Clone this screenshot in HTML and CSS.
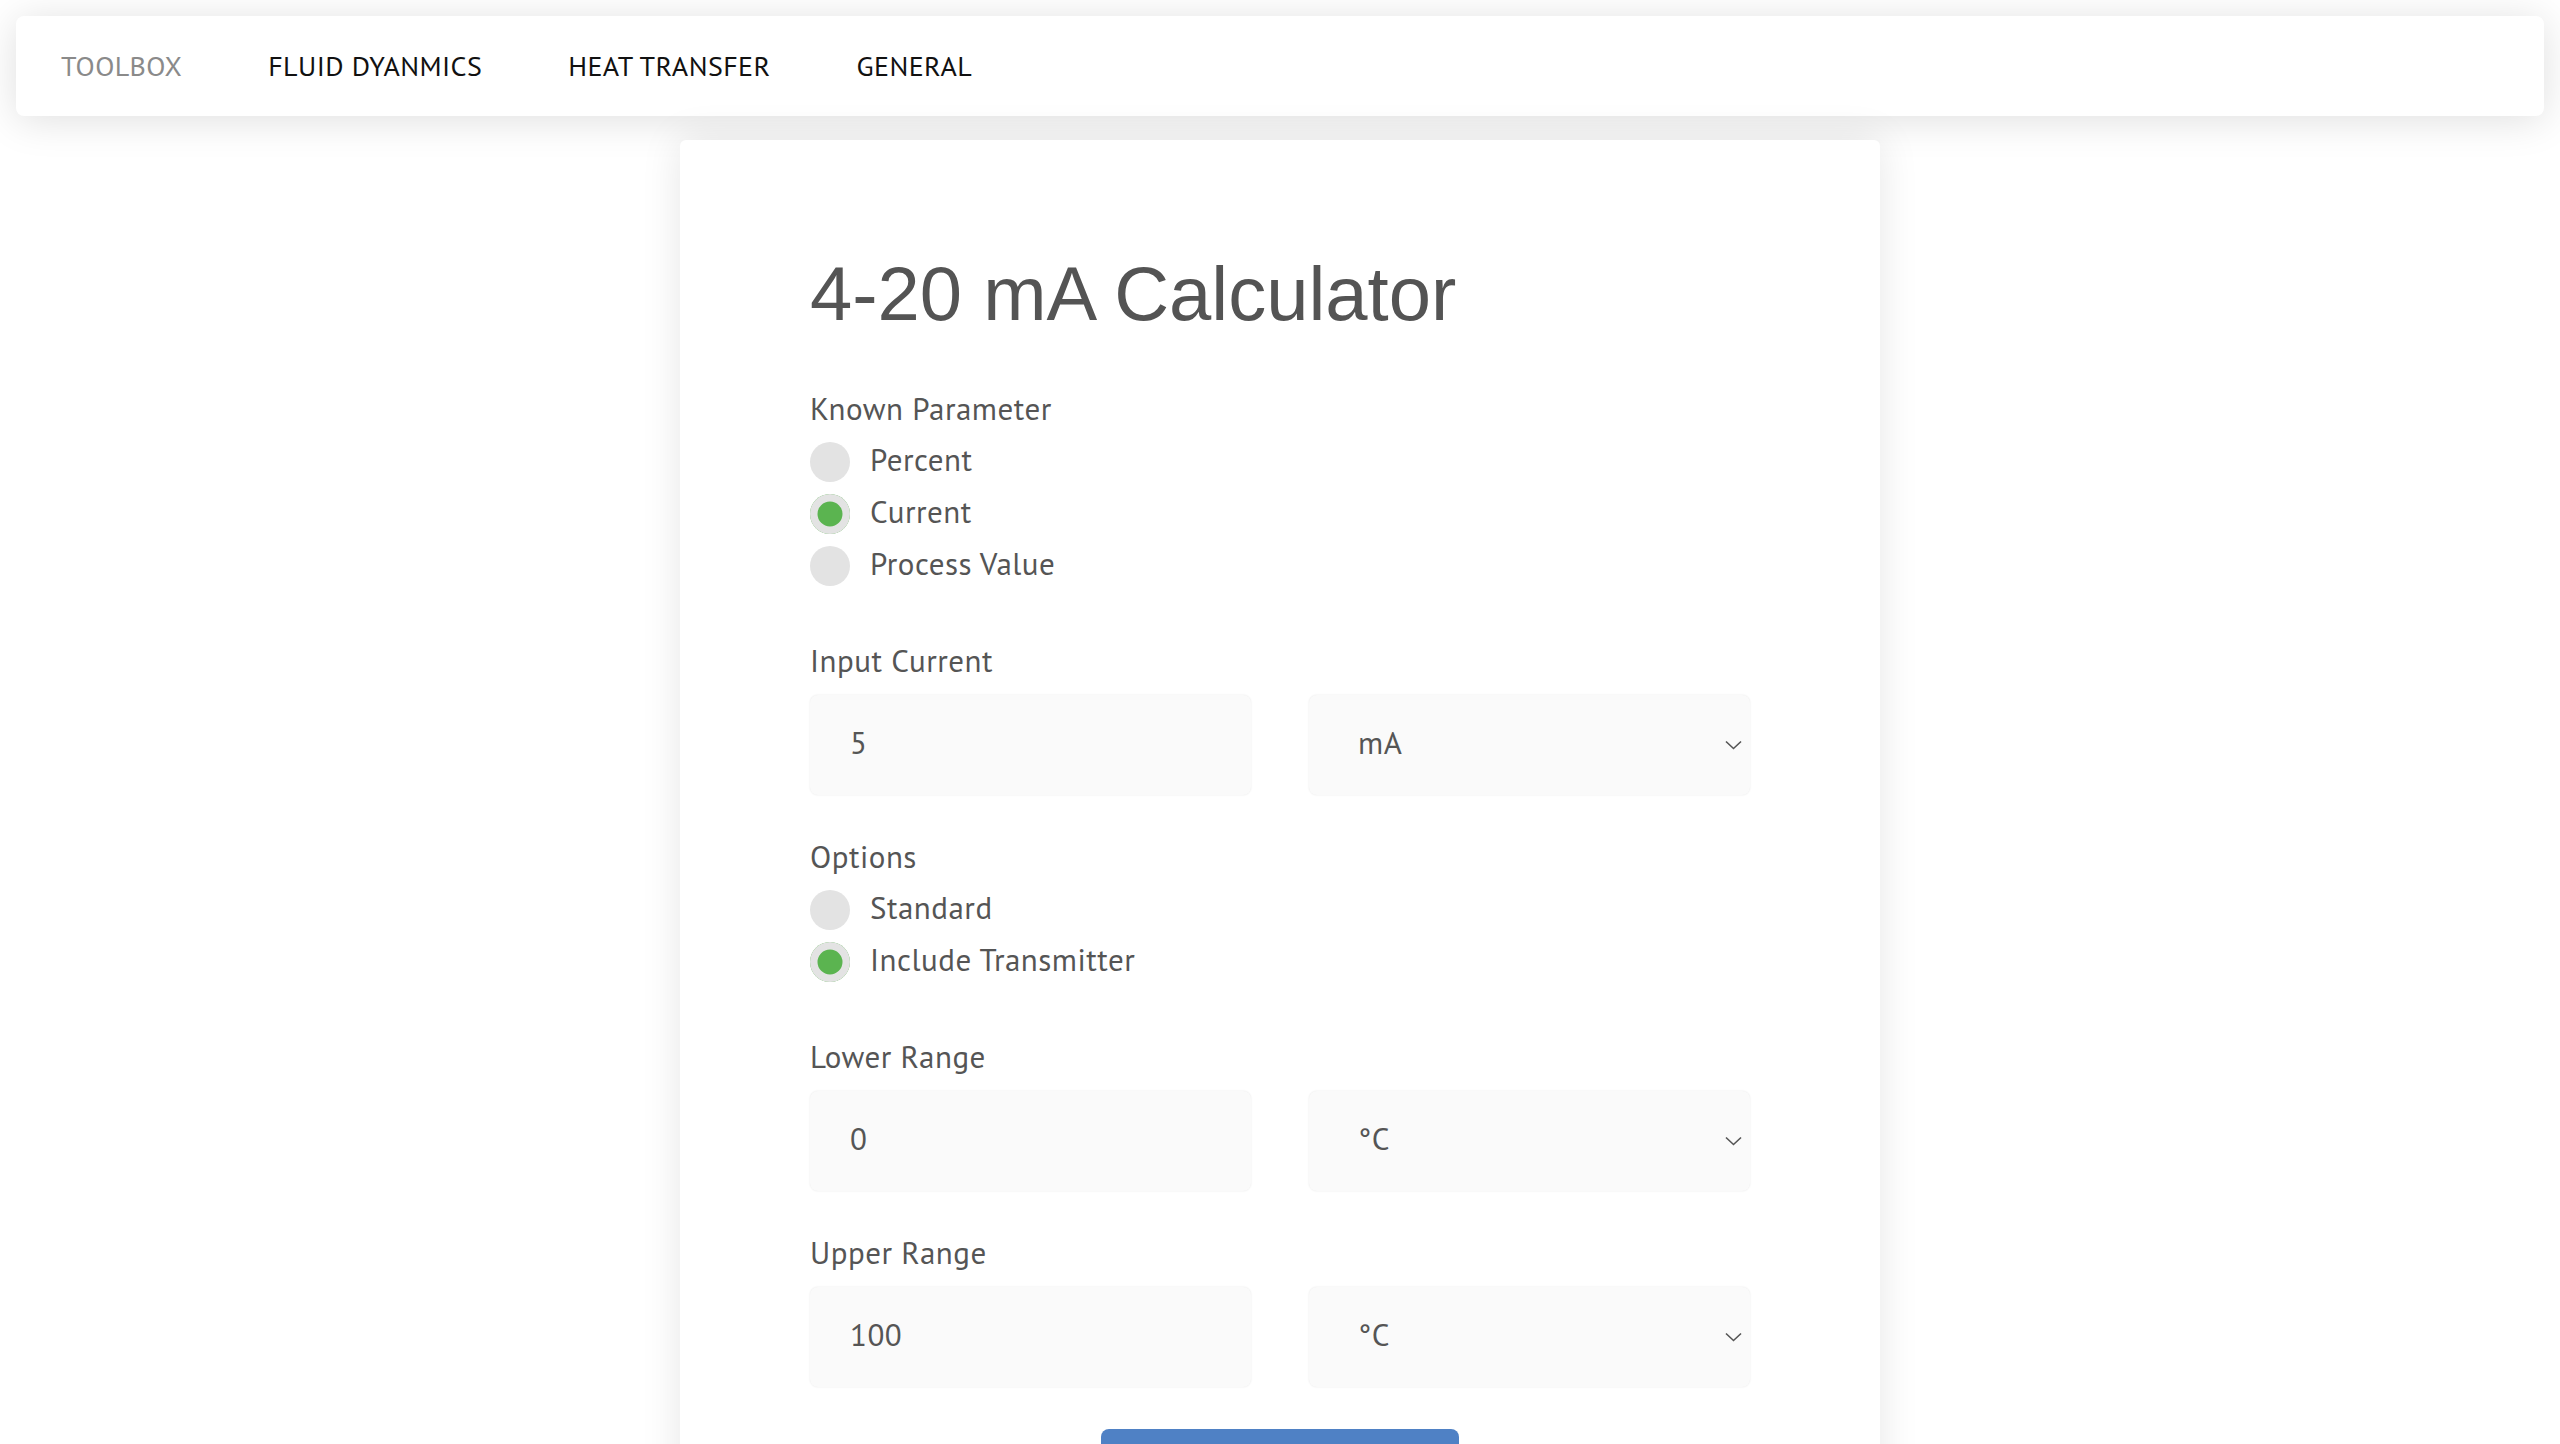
FILE: index.html
```html
<!DOCTYPE html>
<html lang="en">
<head>
<meta charset="utf-8">
<title>4-20 mA Calculator</title>
<link rel="stylesheet" href="styles.css">
</head>
<body>
<nav class="navbar">
  <a class="nav-item nav-brand" href="#">TOOLBOX</a>
  <a class="nav-item" href="#">FLUID DYANMICS</a>
  <a class="nav-item" href="#">HEAT TRANSFER</a>
  <a class="nav-item" href="#">GENERAL</a>
</nav>
<main class="card">
  <h1 class="title">4-20 mA Calculator</h1>

  <div class="radio-group">
    <div class="label">Known Parameter</div>
    <label class="radio"><input type="radio" name="known"><span>Percent</span></label>
    <label class="radio"><input type="radio" name="known" checked><span>Current</span></label>
    <label class="radio"><input type="radio" name="known"><span>Process Value</span></label>
  </div>

  <div class="field">
    <div class="label">Input Current</div>
    <div class="row">
      <input class="input" type="text" value="5">
      <div class="select-wrap">
        <select class="input select"><option>mA</option></select>
        <svg class="chevron" viewBox="0 0 17 10"><path d="M1 1.5 L8.5 8.5 L16 1.5" fill="none" stroke="#555" stroke-width="1.6"/></svg>
      </div>
    </div>
  </div>

  <div class="radio-group">
    <div class="label">Options</div>
    <label class="radio"><input type="radio" name="opt"><span>Standard</span></label>
    <label class="radio"><input type="radio" name="opt" checked><span>Include Transmitter</span></label>
  </div>

  <div class="field">
    <div class="label">Lower Range</div>
    <div class="row">
      <input class="input" type="text" value="0">
      <div class="select-wrap">
        <select class="input select"><option>°C</option></select>
        <svg class="chevron" viewBox="0 0 17 10"><path d="M1 1.5 L8.5 8.5 L16 1.5" fill="none" stroke="#555" stroke-width="1.6"/></svg>
      </div>
    </div>
  </div>

  <div class="field">
    <div class="label">Upper Range</div>
    <div class="row">
      <input class="input" type="text" value="100">
      <div class="select-wrap">
        <select class="input select"><option>°C</option></select>
        <svg class="chevron" viewBox="0 0 17 10"><path d="M1 1.5 L8.5 8.5 L16 1.5" fill="none" stroke="#555" stroke-width="1.6"/></svg>
      </div>
    </div>
  </div>

  <div class="actions">
    <button class="button" type="button">Calculate</button>
  </div>
</main>
</body>
</html>
```
FILE: styles.css
```css
html, body {
  margin: 0;
  padding: 0;
  background: #ffffff;
}

body {
  font-family: "PT Sans", Lato, "Noto Sans", sans-serif;
  color: #555555;
}

.navbar {
  margin: 16px;
  height: 100px;
  box-sizing: border-box;
  background: #ffffff;
  border-radius: 8px;
  box-shadow: 0 4px 40px rgba(0, 0, 0, 0.13);
  display: flex;
  align-items: center;
  padding-left: 45px;
  gap: 86px;
}

.nav-item {
  font-size: 28px;
  letter-spacing: 0.4px;
  color: #111111;
  text-decoration: none;
  line-height: 1;
}

.nav-brand {
  color: #8a8a8a;
}

.card {
  width: 1200px;
  margin: 24px auto 0;
  box-sizing: border-box;
  padding: 116px 130px 60px;
  background: #ffffff;
  border-radius: 6px;
  box-shadow: 0 0 40px rgba(0, 0, 0, 0.1);
}

.title {
  font-family: "Liberation Sans", Arial, sans-serif;
  font-size: 76px;
  font-weight: 400;
  line-height: 76px;
  margin: 0 0 59px;
  color: #545454;
}

.label {
  font-size: 31px;
  letter-spacing: 0.5px;
  line-height: 36px;
  color: #555555;
}

.radio-group {
  margin-bottom: 51px;
}

.radio-group .label {
  margin-bottom: 9px;
}

.radio {
  display: flex;
  align-items: center;
  height: 52px;
  gap: 20px;
  font-size: 31px;
  letter-spacing: 0.5px;
  color: #555555;
}

.radio span {
  padding-bottom: 5px;
}

.radio input {
  appearance: none;
  -webkit-appearance: none;
  margin: 0;
  width: 40px;
  height: 40px;
  border-radius: 50%;
  background: #e3e3e3;
  flex: none;
}

.radio input:checked {
  background: #5bb450;
  box-shadow: inset 0 0 0 7.5px #e3e3e3;
}

.field {
  margin-bottom: 44px;
}

.field .label {
  margin-bottom: 16px;
}

.row {
  display: grid;
  grid-template-columns: 1fr 1fr;
  column-gap: 58px;
}

.input {
  display: block;
  width: 100%;
  height: 100px;
  box-sizing: border-box;
  border: none;
  border-radius: 8px;
  background: #fafafa;
  box-shadow: 0 0 2px rgba(0, 0, 0, 0.1);
  padding: 0 40px 6px;
  font-family: "PT Sans", Lato, "Noto Sans", sans-serif;
  font-size: 31px;
  letter-spacing: 0.5px;
  color: #555555;
  outline: none;
}

.select {
  appearance: none;
  -webkit-appearance: none;
  padding-left: 49px;
}

.select-wrap {
  position: relative;
}

.chevron {
  position: absolute;
  right: 8px;
  top: 50%;
  width: 17px;
  height: 10px;
  transform: translateY(-50%);
  pointer-events: none;
}

.actions {
  display: flex;
  justify-content: center;
  margin-top: -2px;
}

.button {
  width: 358px;
  height: 80px;
  border: none;
  border-radius: 8px;
  background: #4f81c5;
  color: #ffffff;
  font-family: "PT Sans", Lato, "Noto Sans", sans-serif;
  font-size: 30px;
}
```
